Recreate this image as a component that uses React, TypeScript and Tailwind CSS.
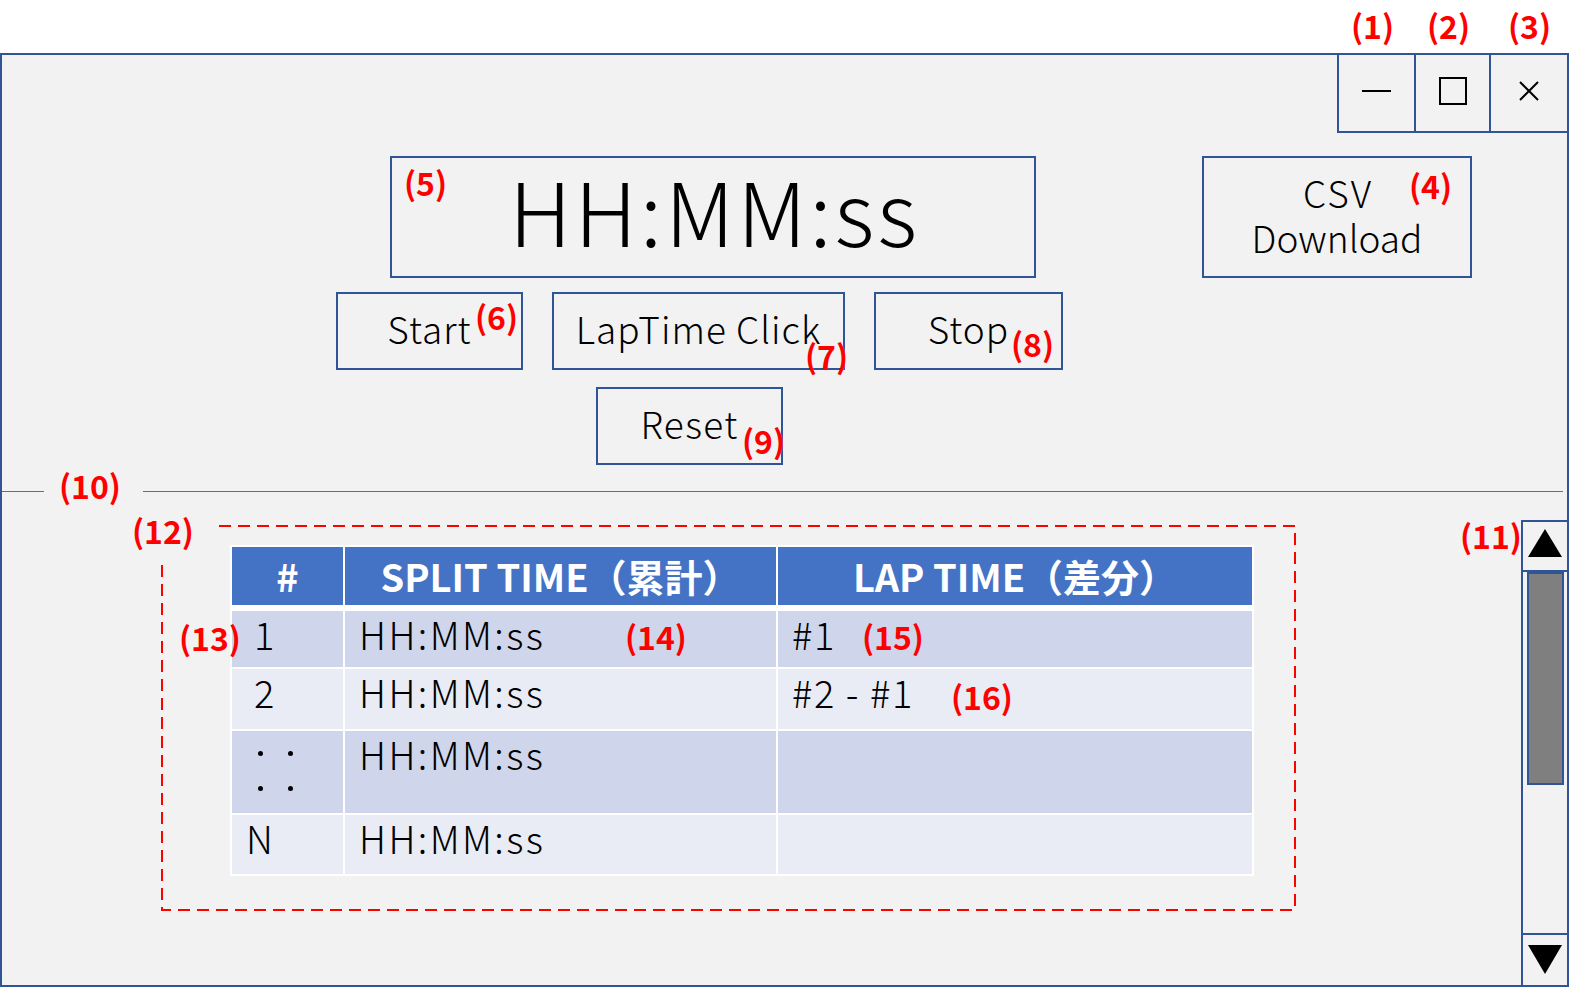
import React from 'react';

const BLUE = 'border-[#2f5597]';

const Label: React.FC<{ text: string; className: string }> = ({ text, className }) => (
  <div
    className={`absolute text-[32px] leading-none font-bold text-[#ff0000] whitespace-nowrap ${className}`}
  >
    {text}
  </div>
);

const rows = [
  { no: '1', split: 'HH:MM:ss', lap: '#1', h: 'h-[56px]', bg: 'bg-[#cfd5ea]' },
  { no: '2', split: 'HH:MM:ss', lap: '#2 - #1', h: 'h-[60px]', bg: 'bg-[#e9ebf5]' },
  { no: 'dots', split: 'HH:MM:ss', lap: '', h: 'h-[82px]', bg: 'bg-[#cfd5ea]' },
  { no: 'N', split: 'HH:MM:ss', lap: '', h: 'h-[59px]', bg: 'bg-[#e9ebf5]' },
];

const Dot = () => <span className="w-[5px] h-[5px] rounded-full bg-black" />;

const LapTable: React.FC = () => (
  <div className="w-[1024px] bg-white p-[2px] flex flex-col">
    {/* header */}
    <div className="flex gap-[2px] h-[58px] mb-[6px]">
      <div className="w-[111px] bg-[#4472c4] flex items-center justify-center text-white font-bold text-[38px] leading-none">
        #
      </div>
      <div className="w-[431px] bg-[#4472c4] flex items-center justify-center text-white font-bold text-[38px] leading-none">
        SPLIT TIME（累計）
      </div>
      <div className="w-[474px] bg-[#4472c4] flex items-center justify-center text-white font-bold text-[38px] leading-none">
        LAP TIME（差分）
      </div>
    </div>
    <div className="flex flex-col gap-[2px]">
      {rows.map((r, i) => (
        <div key={i} className={`flex gap-[2px] ${r.h}`}>
          <div
            className={`w-[111px] ${r.bg} ${r.no === 'N' ? 'pl-[14px]' : 'pl-[22px]'} ${
              r.no === 'dots' ? 'pt-0' : 'pt-[4px]'
            } text-[38px] leading-none font-light`}
          >
            {r.no === 'dots' ? (
              <div className="flex flex-col gap-[30px] pt-[20px] pl-[4px]">
                <div className="flex gap-[25px]">
                  <Dot />
                  <Dot />
                </div>
                <div className="flex gap-[25px]">
                  <Dot />
                  <Dot />
                </div>
              </div>
            ) : (
              r.no
            )}
          </div>
          <div className={`w-[431px] ${r.bg} pl-[14px] pt-[4px] text-[38px] leading-none tracking-[2.4px] font-light`}>
            {r.split}
          </div>
          <div className={`w-[474px] ${r.bg} pl-[14px] pt-[4px] text-[38px] leading-none tracking-[1.6px] font-light whitespace-pre`}>
            {r.lap}
          </div>
        </div>
      ))}
    </div>
  </div>
);

export default function App() {
  return (
    <div className="relative w-[1587px] h-[1006px] bg-white pt-[53px] overflow-hidden font-['Noto_Sans_CJK_JP','Noto_Sans',sans-serif] text-black">
      {/* window */}
      <div className={`w-[1569px] h-[934px] border-2 ${BLUE} bg-[#f2f2f2] flex flex-col font-light`}>
        {/* title bar */}
        <div className="flex justify-end h-[78px] shrink-0">
          <div className={`w-[77px] border-l-2 border-b-2 ${BLUE} flex items-center justify-center pb-[4px]`}>
            <div className="w-[29px] h-[2px] bg-black" />
          </div>
          <div className={`w-[77px] border-x-2 border-b-2 ${BLUE} flex items-center justify-center pb-[4px]`}>
            <div className="w-[28px] h-[28px] border-2 border-black" />
          </div>
          <div className={`w-[76px] border-b-2 ${BLUE} flex items-center justify-center pb-[4px]`}>
            <svg width="20" height="20" viewBox="0 0 20 20">
              <path d="M1 1 L19 19 M19 1 L1 19" stroke="black" strokeWidth="2" />
            </svg>
          </div>
        </div>

        {/* time display + csv */}
        <div className="flex mt-[23px] pl-[388px]">
          <div className={`w-[646px] h-[122px] border-2 ${BLUE} flex items-center justify-center pb-[16px]`}>
            <span className="text-[88px] leading-none tracking-[3px] pl-[3px]">HH:MM:ss</span>
          </div>
          <div className={`ml-[166px] w-[270px] h-[122px] border-2 ${BLUE} flex flex-col items-center justify-center pb-[4px] text-[37px] leading-[45px]`}>
            <span className="tracking-[2px] pl-[2px]">CSV</span>
            <span>Download</span>
          </div>
        </div>

        {/* control buttons */}
        <div className="flex mt-[14px] pl-[334px] gap-[30px] tracking-[1px]">
          <div className={`w-[187px] h-[78px] border-2 ${BLUE} flex items-center justify-center pb-[6px] text-[37px] leading-none`}>
            Start
          </div>
          <div className={`w-[293px] h-[78px] border-2 ${BLUE} flex items-center justify-center pb-[6px] text-[37px] leading-none -ml-[1px]`}>
            LapTime Click
          </div>
          <div className={`w-[189px] h-[78px] border-2 ${BLUE} flex items-center justify-center pb-[6px] text-[37px] leading-none -ml-[1px]`}>
            Stop
          </div>
        </div>
        <div className="flex mt-[17px] pl-[594px]">
          <div className={`w-[187px] h-[78px] border-2 ${BLUE} flex items-center justify-center pb-[6px] text-[37px] leading-none tracking-[1.4px]`}>
            Reset
          </div>
        </div>

        {/* divider */}
        <div className="flex mt-[26px] h-px shrink-0 pr-[4px]">
          <div className="w-[42px] bg-[#4472c4]" />
          <div className="w-[99px]" />
          <div className="flex-1 bg-[#4472c4]" />
        </div>

        {/* list area */}
        <div className="flex-1 flex">
          <div className="ml-[159px] mt-[33px] relative w-[1135px] h-[386px] pl-[69px] pt-[20px]">
            <svg className="absolute inset-0" width="1135" height="386">
              <rect
                x="1"
                y="1"
                width="1133"
                height="384"
                fill="none"
                stroke="#ff0000"
                strokeWidth="2"
                strokeDasharray="12 7"
              />
            </svg>
            <div className="absolute -left-[28px] -top-[18px] w-[85px] h-[55px] bg-[#f2f2f2]" />
            <div className="relative">
              <LapTable />
            </div>
          </div>

          {/* scrollbar */}
          <div className={`ml-auto mt-[28px] w-[46px] border-l-2 border-t-2 ${BLUE} flex flex-col`}>
            <div className={`h-[50px] shrink-0 border-b-2 ${BLUE} flex items-center justify-center pb-[6px]`}>
              <svg width="34" height="28" viewBox="0 0 34 28">
                <polygon points="17,0 34,28 0,28" fill="black" />
              </svg>
            </div>
            <div className={`mx-auto shrink-0 w-[37px] h-[213px] border-2 ${BLUE} bg-[#7f7f7f]`} />
            <div className="flex-1" />
            <div className={`h-[52px] shrink-0 border-t-2 ${BLUE} flex items-center justify-center pb-[2px]`}>
              <svg width="34" height="29" viewBox="0 0 34 29">
                <polygon points="0,0 34,0 17,29" fill="black" />
              </svg>
            </div>
          </div>
        </div>
      </div>

      {/* annotation labels */}
      <Label text="(1)" className="left-[1351px] top-[9px]" />
      <Label text="(2)" className="left-[1427px] top-[9px]" />
      <Label text="(3)" className="left-[1508px] top-[9px]" />
      <Label text="(4)" className="left-[1409px] top-[169px]" />
      <Label text="(5)" className="left-[404px] top-[166px]" />
      <Label text="(6)" className="left-[475px] top-[300px]" />
      <Label text="(7)" className="left-[805px] top-[339px]" />
      <Label text="(8)" className="left-[1011px] top-[327px]" />
      <Label text="(9)" className="left-[742px] top-[424px]" />
      <Label text="(10)" className="left-[59px] top-[469px]" />
      <Label text="(11)" className="left-[1460px] top-[519px]" />
      <Label text="(12)" className="left-[132px] top-[514px]" />
      <Label text="(13)" className="left-[179px] top-[621px]" />
      <Label text="(14)" className="left-[625px] top-[620px]" />
      <Label text="(15)" className="left-[862px] top-[620px]" />
      <Label text="(16)" className="left-[951px] top-[680px]" />
    </div>
  );
}
